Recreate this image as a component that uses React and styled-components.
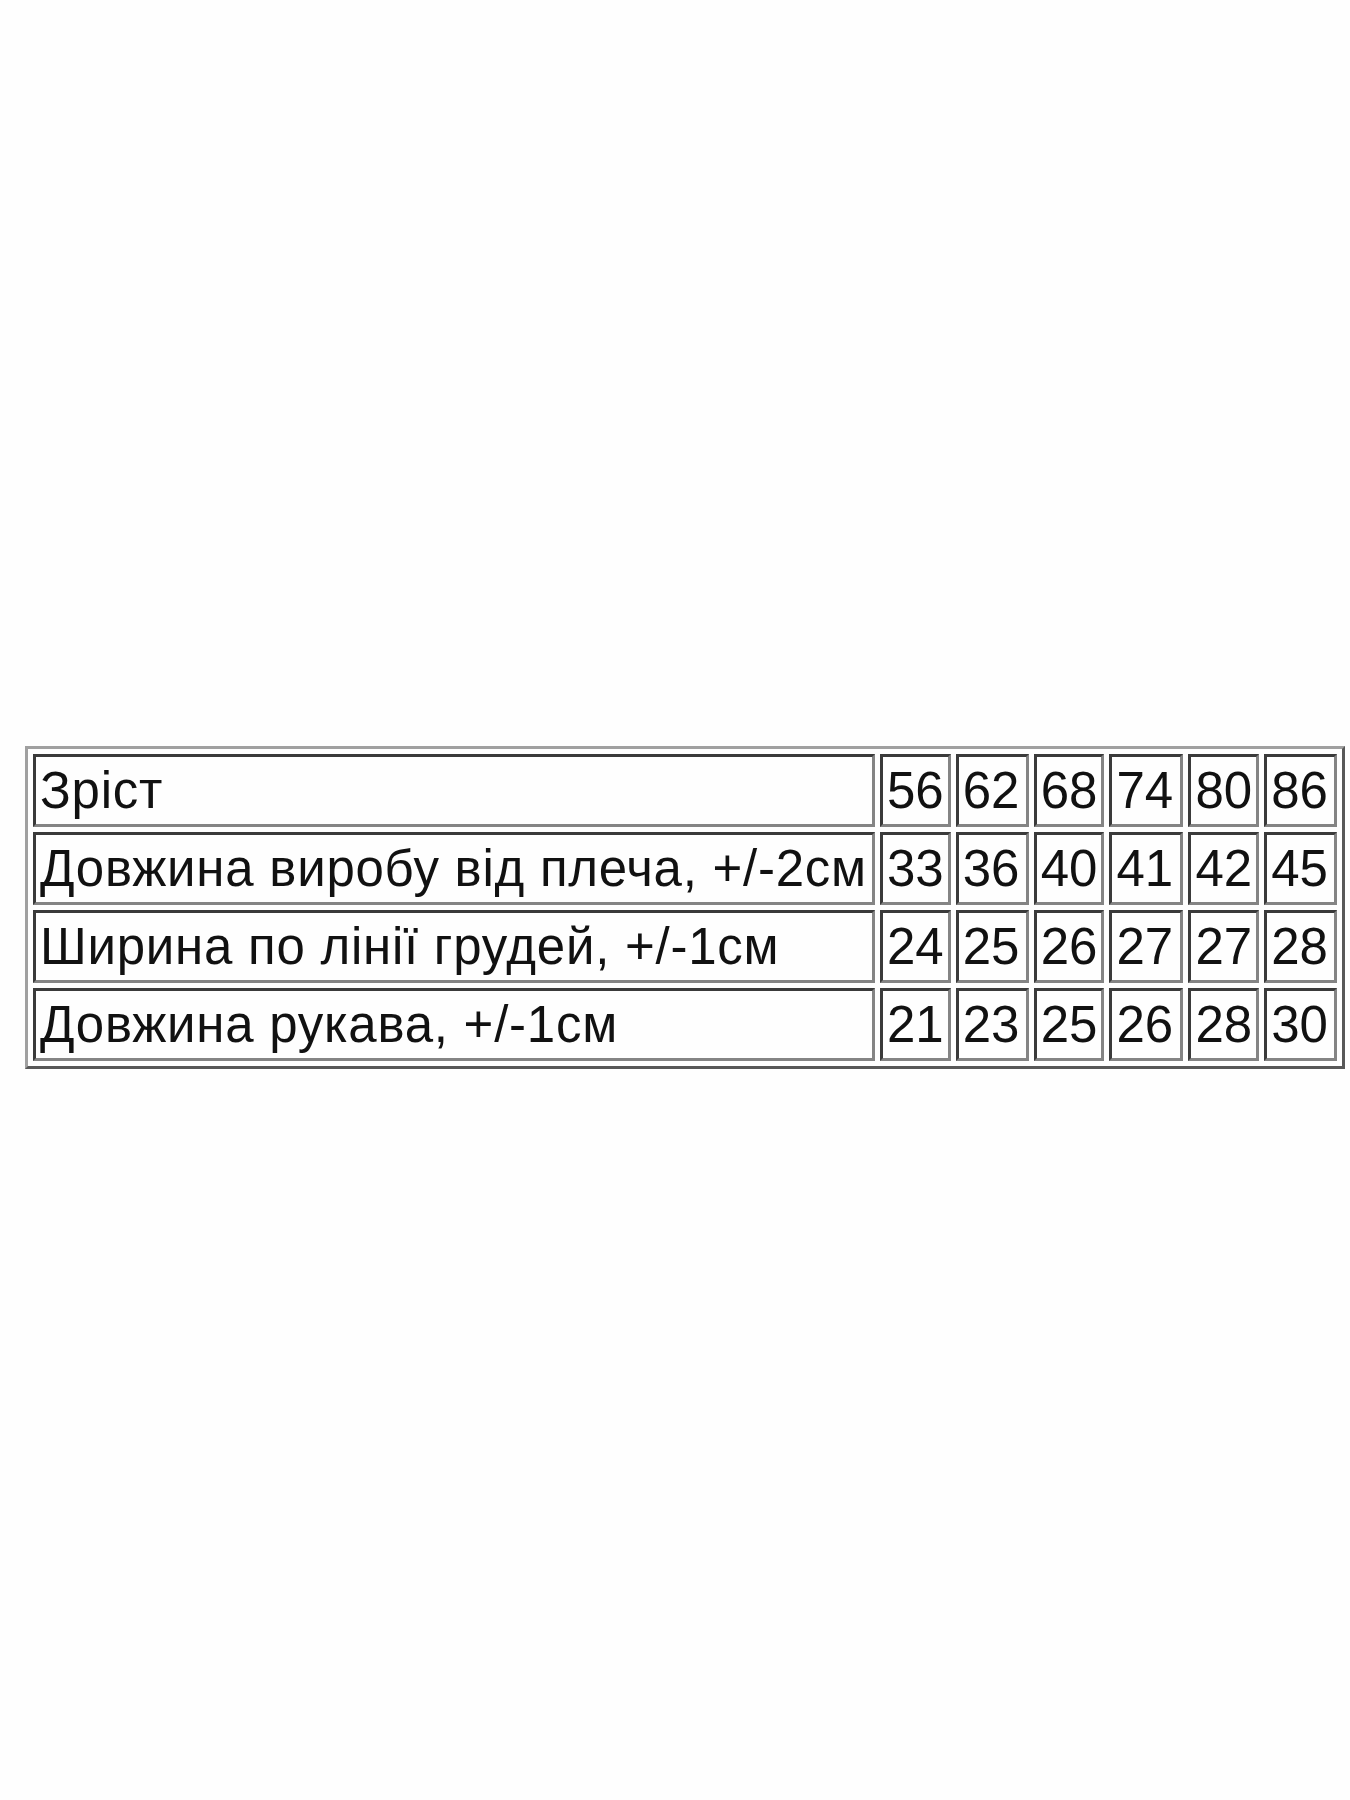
import React from "react";
import styled, { createGlobalStyle } from "styled-components";

const Global = createGlobalStyle`
  html, body { margin: 0; padding: 0; background: #fefefe; }
  body { font-family: "Liberation Sans", Arial, sans-serif; }
`;

const Page = styled.div`
  width: 1350px;
  height: 1800px;
  box-sizing: border-box;
  padding: 746px 0 0 25px;
`;

const Table = styled.table`
  border-collapse: separate;
  border-spacing: 5px 5.5px;
  border-style: solid;
  border-width: 3px;
  border-color: #a0a0a0 #585858 #585858 #a0a0a0;
  table-layout: fixed;
`;

const Cell = styled.td`
  box-sizing: border-box;
  width: ${(p) => p.$w}px;
  height: 73px;
  padding: 0 4px;
  border-style: solid;
  border-width: 3px;
  border-color: #3a3a3a #848484 #848484 #3a3a3a;
  font-family: "Liberation Sans", Arial, sans-serif;
  font-size: 51px;
  line-height: 1;
  letter-spacing: ${(p) => (p.$label ? "0.75px" : "0")};
  color: #111;
  white-space: nowrap;
  vertical-align: middle;
  text-align: left;
  overflow: visible;
`;

const widths = [842, 69, 73, 70, 74, 70, 73];

const rows = [
  ["Зріст", "56", "62", "68", "74", "80", "86"],
  ["Довжина виробу від плеча, +/-2см", "33", "36", "40", "41", "42", "45"],
  ["Ширина по лінії грудей, +/-1см", "24", "25", "26", "27", "27", "28"],
  ["Довжина рукава, +/-1см", "21", "23", "25", "26", "28", "30"],
];

export default function App() {
  return (
    <>
      <Global />
      <Page>
        <Table>
          <tbody>
            {rows.map((r, i) => (
              <tr key={i}>
                {r.map((c, j) => (
                  <Cell key={j} $w={widths[j]} $label={j === 0}>
                    {c}
                  </Cell>
                ))}
              </tr>
            ))}
          </tbody>
        </Table>
      </Page>
    </>
  );
}
